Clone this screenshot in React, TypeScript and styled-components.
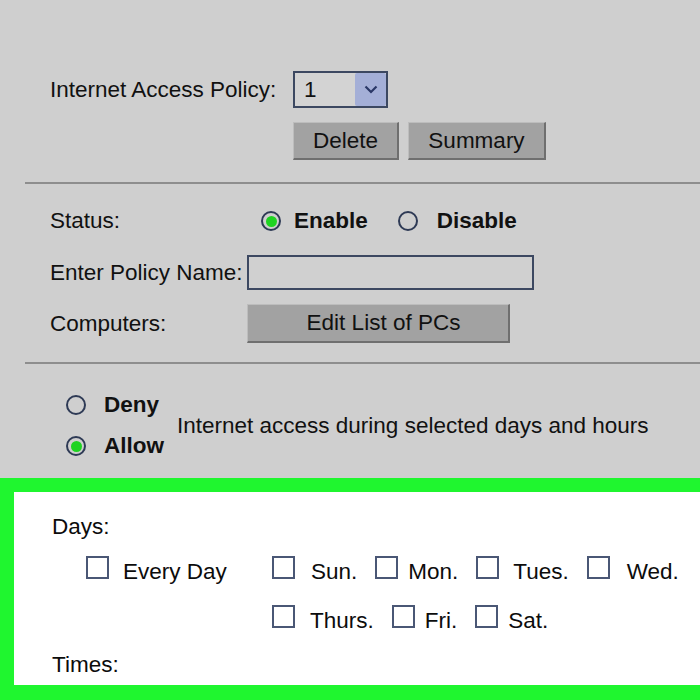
import React from "react";
import styled, { createGlobalStyle } from "styled-components";

const Global = createGlobalStyle`
  html, body { margin: 0; padding: 0; background: #cfcfcf; }
  body { font-family: "Liberation Sans", Arial, sans-serif; }
`;

const Page = styled.div`
  width: 700px;
  height: 700px;
  display: flex;
  flex-direction: column;
  background: #cfcfcf;
  color: #111;
  font-size: 22.5px;
  overflow: hidden;
`;

const Section = styled.div<{ $top: number }>`
  padding-left: 50px;
  margin-top: ${(p) => p.$top}px;
  display: flex;
  flex-direction: column;
`;

const FormRow = styled.div<{ $label: number; $top?: number; $h: number }>`
  display: grid;
  grid-template-columns: ${(p) => p.$label}px auto;
  align-items: center;
  height: ${(p) => p.$h}px;
  margin-top: ${(p) => p.$top ?? 0}px;
`;

const Label = styled.span`
  white-space: nowrap;
`;

const SelectBox = styled.div`
  box-sizing: border-box;
  width: 95px;
  height: 37px;
  border: 2px solid #3c4861;
  background: #d3d3d3;
  display: flex;
  align-items: stretch;
  justify-content: space-between;
`;

const SelectValue = styled.span`
  padding-left: 9px;
  padding-top: 1px;
  display: flex;
  align-items: center;
`;

const SelectArrow = styled.span`
  width: 31px;
  background: #a4afd7;
  border-radius: 2px;
  display: flex;
  align-items: center;
  justify-content: center;
`;

const ButtonRow = styled.div`
  display: flex;
  gap: 9px;
  margin-top: 14px;
  padding-left: 243px;
`;

const GrayButton = styled.div<{ $w: number; $h: number; $shift?: number }>`
  box-sizing: border-box;
  width: ${(p) => p.$w}px;
  height: ${(p) => p.$h}px;
  padding-left: ${(p) => p.$shift ?? 0}px;
  background: #a2a2a2;
  border-top: 1px solid #bdbdbd;
  border-left: 1px solid #bdbdbd;
  border-right: 2px solid #6f6f6f;
  border-bottom: 2px solid #6f6f6f;
  display: flex;
  align-items: center;
  justify-content: center;
  white-space: nowrap;
  color: #111;
`;

const Divider = styled.div<{ $top: number }>`
  height: 2px;
  background: #8e8e8e;
  margin-left: 25px;
  margin-top: ${(p) => p.$top}px;
`;

const RadioGroup = styled.div<{ $indent?: number }>`
  display: flex;
  align-items: center;
  padding-left: ${(p) => p.$indent ?? 0}px;
`;

const RadioItem = styled.span<{ $gap: number; $after?: number }>`
  display: inline-flex;
  align-items: center;
  gap: ${(p) => p.$gap}px;
  margin-right: ${(p) => p.$after ?? 0}px;
  font-weight: bold;
  white-space: nowrap;
`;

const RadioRing = styled.span<{ $on?: boolean }>`
  box-sizing: border-box;
  width: 20px;
  height: 20px;
  border-radius: 50%;
  border: 2px solid #2e3a55;
  display: inline-flex;
  align-items: center;
  justify-content: center;
  &::after {
    content: "";
    width: 11px;
    height: 11px;
    border-radius: 50%;
    background: ${(p) => (p.$on ? "#1fd322" : "transparent")};
  }
`;

const TextInput = styled.div`
  box-sizing: border-box;
  width: 287px;
  height: 35px;
  border: 2px solid #3c4861;
  background: #d0d0d0;
`;

const AccessBlock = styled.div`
  margin-top: 25px;
  padding-left: 16px;
  display: flex;
  align-items: center;
  gap: 13px;
`;

const AccessChoices = styled.div`
  display: flex;
  flex-direction: column;
  gap: 9px;
`;

const AccessChoice = styled(RadioItem)`
  height: 32px;
`;

const Frame = styled.div`
  margin-top: 16px;
  flex: 1;
  border-top: 14px solid #1ff62f;
  border-left: 14px solid #1ff62f;
  border-bottom: 15px solid #1ff62f;
  background: #ffffff;
  padding: 21px 0 0 38px;
  display: flex;
  flex-direction: column;
  color: #0c0c0c;
`;

const LineText = styled.div<{ $top?: number }>`
  line-height: 28px;
  height: 28px;
  margin-top: ${(p) => p.$top ?? 0}px;
`;

const DaysBlock = styled.div`
  display: flex;
  margin-top: 15px;
  padding-left: 34px;
`;

const EveryDayCol = styled.div`
  width: 186px;
`;

const WeekCol = styled.div`
  display: flex;
  flex-direction: column;
  gap: 21px;
`;

const CheckRow = styled.div`
  display: flex;
  align-items: baseline;
  gap: 18px;
  line-height: 28px;
  height: 28px;
`;

const CheckItem = styled.span<{ $gap: number }>`
  display: inline-flex;
  align-items: baseline;
  gap: ${(p) => p.$gap}px;
  white-space: nowrap;
  line-height: 28px;
`;

const CheckBox = styled.span`
  box-sizing: border-box;
  display: inline-block;
  width: 23px;
  height: 23px;
  border: 2px solid #4a5775;
  margin-bottom: 1px;
`;

const Chevron = () => (
  <svg width="14" height="9" viewBox="0 0 14 9">
    <path d="M1.5 1.5 L7 7 L12.5 1.5" fill="none" stroke="#2a3766" strokeWidth="2.2" />
  </svg>
);

const Day = ({ label, gap }: { label: string; gap: number }) => (
  <CheckItem $gap={gap}>
    <CheckBox />
    <span>{label}</span>
  </CheckItem>
);

export default function App() {
  return (
    <Page>
      <Global />
      <Section $top={71}>
        <FormRow $label={243} $h={37}>
          <Label>Internet Access Policy:</Label>
          <SelectBox>
            <SelectValue>1</SelectValue>
            <SelectArrow>
              <Chevron />
            </SelectArrow>
          </SelectBox>
        </FormRow>
        <ButtonRow>
          <GrayButton $w={106} $h={38}>Delete</GrayButton>
          <GrayButton $w={138} $h={38}>Summary</GrayButton>
        </ButtonRow>
      </Section>
      <Divider $top={22} />
      <Section $top={0}>
        <FormRow $label={197} $h={32} $top={21}>
          <Label>Status:</Label>
          <RadioGroup $indent={14}>
            <RadioItem $gap={13} $after={30}>
              <RadioRing $on />
              Enable
            </RadioItem>
            <RadioItem $gap={19}>
              <RadioRing />
              Disable
            </RadioItem>
          </RadioGroup>
        </FormRow>
        <FormRow $label={197} $h={35} $top={18}>
          <Label>Enter Policy Name:</Label>
          <TextInput />
        </FormRow>
        <FormRow $label={197} $h={39} $top={14}>
          <Label>Computers:</Label>
          <GrayButton $w={263} $h={39} $shift={11}>Edit List of PCs</GrayButton>
        </FormRow>
      </Section>
      <Divider $top={19} />
      <Section $top={0}>
        <AccessBlock>
          <AccessChoices>
            <AccessChoice $gap={18}>
              <RadioRing />
              Deny
            </AccessChoice>
            <AccessChoice $gap={18}>
              <RadioRing $on />
              Allow
            </AccessChoice>
          </AccessChoices>
          <Label>Internet access during selected days and hours</Label>
        </AccessBlock>
      </Section>
      <Frame>
        <LineText>Days:</LineText>
        <DaysBlock>
          <EveryDayCol>
            <CheckRow>
              <Day label="Every Day" gap={14} />
            </CheckRow>
          </EveryDayCol>
          <WeekCol>
            <CheckRow>
              <Day label="Sun." gap={16} />
              <Day label="Mon." gap={10} />
              <Day label="Tues." gap={14} />
              <Day label="Wed." gap={17} />
            </CheckRow>
            <CheckRow>
              <Day label="Thurs." gap={15} />
              <Day label="Fri." gap={10} />
              <Day label="Sat." gap={10} />
            </CheckRow>
          </WeekCol>
        </DaysBlock>
        <LineText $top={18}>Times:</LineText>
      </Frame>
    </Page>
  );
}
